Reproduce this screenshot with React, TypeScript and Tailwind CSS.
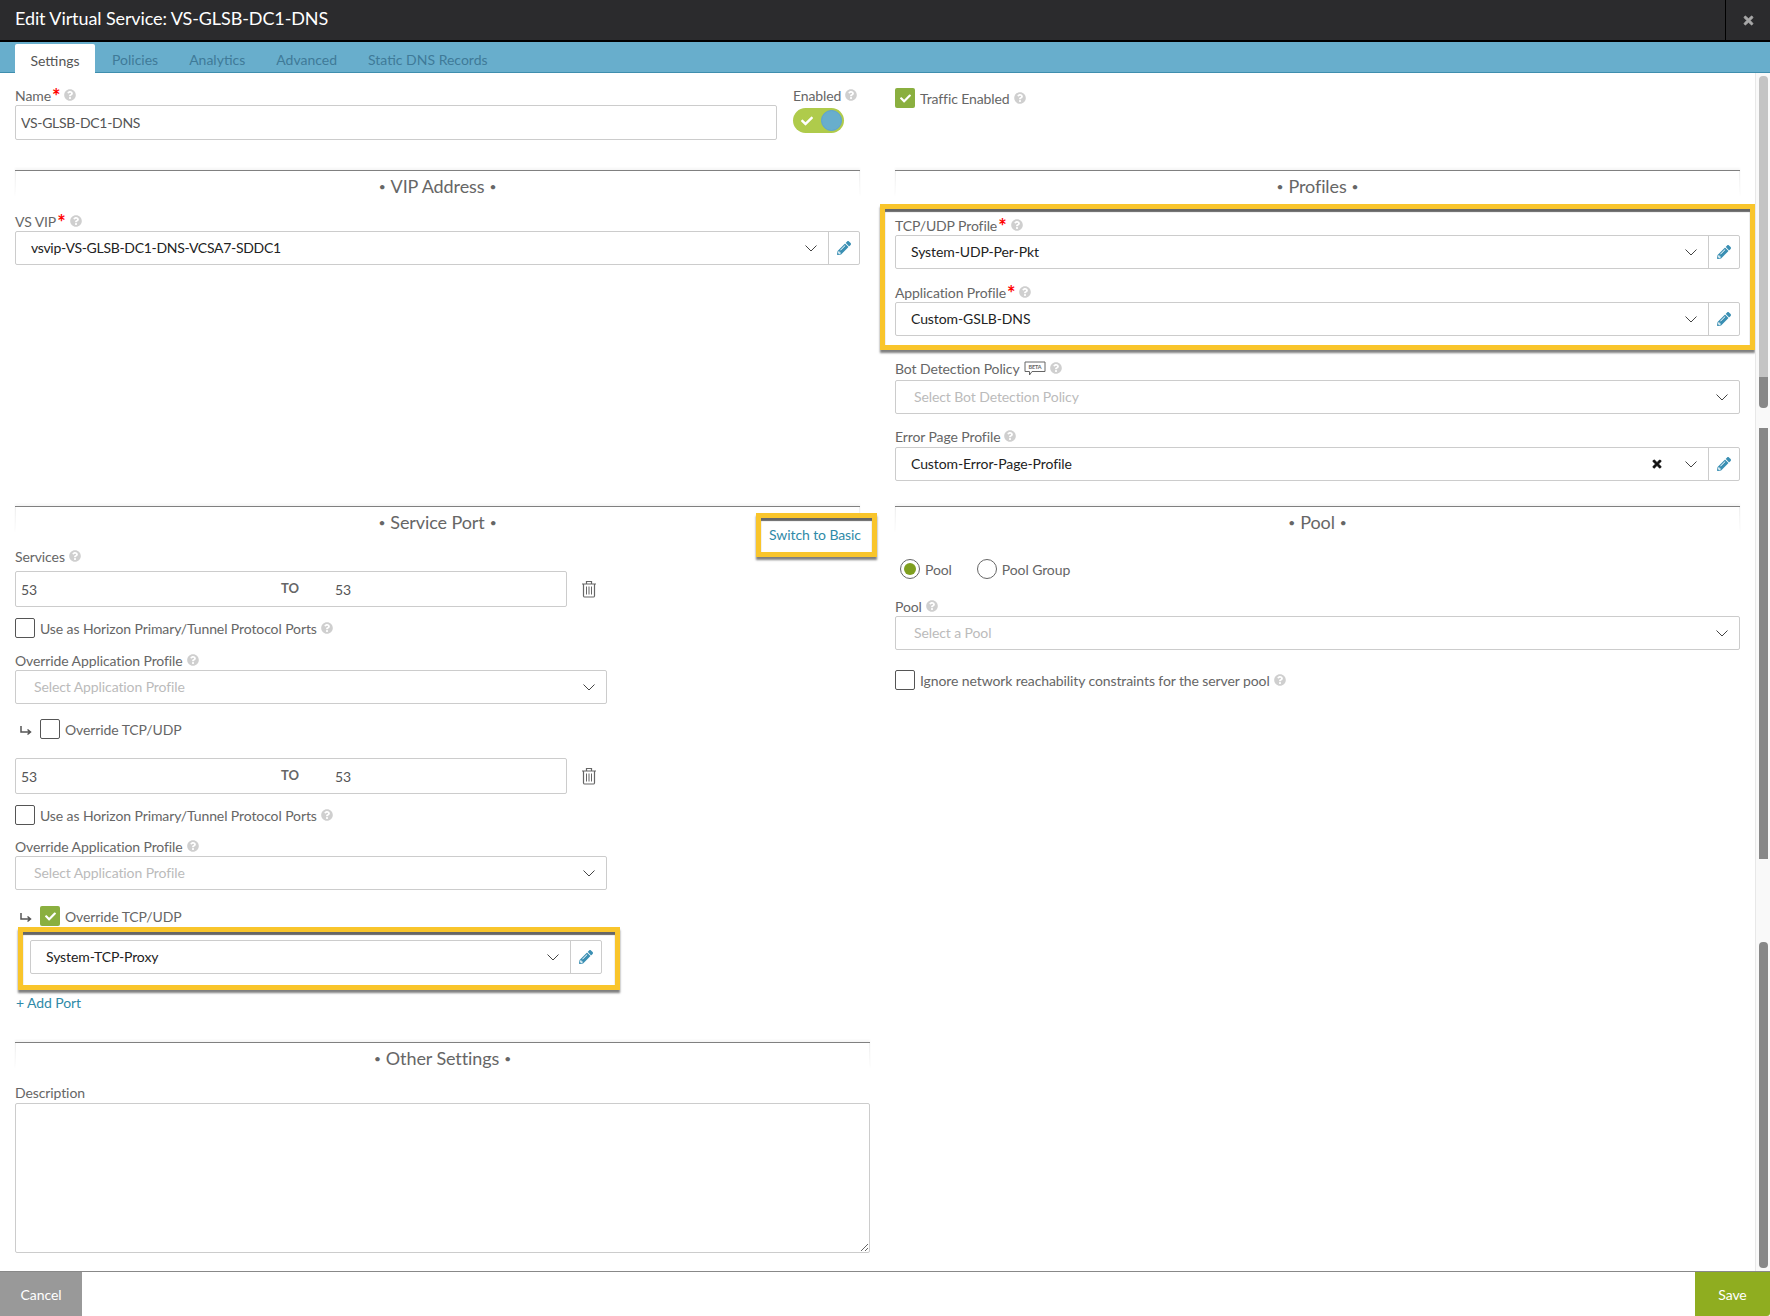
import React from 'react';
import { FaCheck, FaPencilAlt, FaQuestionCircle, FaTimes } from 'react-icons/fa';

const Help = () => <FaQuestionCircle className="ml-[4px] text-[#cfcfcf] shrink-0" size={12} />;

const Star = () => <span className="ml-[1px] h-[18px] text-[20px] leading-[20px] font-bold text-[#ff0000]">*</span>;

const Label: React.FC<{ text: string; req?: boolean; help?: boolean; children?: React.ReactNode }> = ({ text, req, help = true, children }) => (
  <div className="flex items-center h-[18px] pb-[2px] text-[14px] text-[#666666] whitespace-nowrap">
    <span>{text}</span>
    {req && <Star />}
    {children}
    {help && <Help />}
  </div>
);

const Chevron = () => (
  <svg width="12" height="7" viewBox="0 0 12 7" fill="none" className="shrink-0">
    <path d="M.5.5L6 6l5.5-5.5" stroke="#444444" strokeWidth="1" />
  </svg>
);

const Pencil = () => <FaPencilAlt className="text-[#3a8fb3]" size={14} />;

const Section: React.FC<{ title: string; className?: string }> = ({ title, className = '' }) => (
  <div className={`relative h-[27px] flex items-center justify-center border-t border-[#808080] text-[18px] text-[#666666] shadow-[0_-2px_2px_rgba(0,0,0,0.04)] ${className}`}>
    <span className="absolute left-0 top-0 h-full w-px bg-gradient-to-b from-[#eeeeee] to-white" />
    <span className="absolute right-0 top-0 h-full w-px bg-gradient-to-b from-[#eeeeee] to-white" />
    <span className="flex items-center gap-[5px] pt-[5px]">
      <span className="text-[12px]">•</span>
      {title}
      <span className="text-[12px]">•</span>
    </span>
  </div>
);

const Select: React.FC<{
  value?: string;
  placeholder?: string;
  edit?: boolean;
  clear?: boolean;
  className?: string;
}> = ({ value, placeholder, edit = true, clear, className = '' }) => (
  <div className={`flex h-[34px] items-stretch rounded-[2px] border border-[#cccccc] bg-white text-[14px] ${className}`}>
    <div className={`flex-1 flex items-center min-w-0 pb-[2px] ${value ? 'pl-[15px] text-[#222222]' : 'pl-[18px] text-[#bbbbbb]'}`}>
      {value || placeholder}
    </div>
    {clear && (
      <div className="flex items-center pr-[22px]">
        <FaTimes className="text-[#111111] stroke-[30px]" size={12} />
      </div>
    )}
    <div className="flex items-center pr-[11px]">
      <Chevron />
    </div>
    {edit && (
      <div className="w-[31px] flex items-center justify-center border-l border-[#cccccc]">
        <Pencil />
      </div>
    )}
  </div>
);

const Checkbox: React.FC<{ checked?: boolean }> = ({ checked }) =>
  checked ? (
    <div className="w-[20px] h-[20px] rounded-[2px] bg-[#8aaf3f] flex items-center justify-center shrink-0">
      <FaCheck className="text-white" size={11} />
    </div>
  ) : (
    <div className="w-[20px] h-[20px] rounded-[2px] border border-[#555555] bg-white shrink-0" />
  );

const CheckRow: React.FC<{ text: string; checked?: boolean; help?: boolean; className?: string }> = ({ text, checked, help = true, className = '' }) => (
  <div className={`flex items-center h-[20px] text-[14px] text-[#666666] ${className}`}>
    <Checkbox checked={checked} />
    <span className="ml-[5px]">{text}</span>
    {help && <Help />}
  </div>
);

const Trash = () => (
  <svg width="16" height="18" viewBox="0 0 16 18" fill="none" stroke="#666666" strokeWidth="1.2" className="shrink-0">
    <path d="M1 4h14M5.5 4V1.5h5V4M2.5 4v12a1.2 1.2 0 0 0 1.2 1h8.6a1.2 1.2 0 0 0 1.2-1V4" />
    <path d="M5.5 6.5v8M8 6.5v8M10.5 6.5v8" strokeWidth="1" />
  </svg>
);

const PortRange = ({ className = '' }: { className?: string }) => (
  <div className={`flex items-center ${className}`}>
    <div className="w-[552px] h-[36px] flex items-center rounded-[2px] border border-[#cccccc] text-[14px] text-[#555555]">
      <span className="ml-[5px] w-[260px]">53</span>
      <span className="w-[54px] font-bold text-[13px] text-[#666666]">TO</span>
      <span>53</span>
    </div>
    <div className="ml-[14px]">
      <Trash />
    </div>
  </div>
);

const ArrowRow: React.FC<{ checked?: boolean; className?: string }> = ({ checked, className = '' }) => (
  <div className={`flex items-center ${className}`}>
    <svg width="12" height="10" viewBox="0 0 12 10" fill="none" stroke="#555555" strokeWidth="1.5" className="ml-[5px] mr-[8px] mt-[3px]">
      <path d="M1 0v6h9M7.5 3.5L10.5 6l-3 2.5" />
    </svg>
    <CheckRow text="Override TCP/UDP" checked={checked} help={false} />
  </div>
);

const Radio: React.FC<{ text: string; on?: boolean }> = ({ text, on }) => (
  <div className="flex items-center h-[20px] text-[14px] text-[#666666]">
    <div className="w-[20px] h-[20px] rounded-full border border-[#666666] flex items-center justify-center">
      {on && <div className="w-[12px] h-[12px] rounded-full bg-[#7f9f1f]" />}
    </div>
    <span className="ml-[5px]">{text}</span>
  </div>
);

const Highlight: React.FC<{ className?: string; children: React.ReactNode }> = ({ className = '', children }) => (
  <div className={`border-[5px] border-[#f9c52b] bg-white shadow-[0_3px_2px_rgba(0,0,0,0.5),inset_0_3px_1px_#666666] ${className}`}>
    {children}
  </div>
);

export default function App() {
  return (
    <div className="w-[1770px] h-[1316px] flex flex-col overflow-hidden bg-white tracking-[-0.1px] [font-family:Lato,sans-serif]">
      {/* title bar */}
      <div className="h-[42px] shrink-0 flex items-center justify-between bg-[#2b2b2d] border-b-2 border-black">
        <span className="ml-[15px] pb-[3px] text-[18px] text-white">Edit Virtual Service: VS-GLSB-DC1-DNS</span>
        <div className="w-[45px] h-full flex items-center justify-center border-l border-black">
          <FaTimes className="text-[#a8a8a8] stroke-[30px]" size={13} />
        </div>
      </div>

      {/* tabs */}
      <div className="h-[31px] shrink-0 flex items-end pl-[15px] bg-[#68aecc] border-b border-[#3f8eae] text-[14px] tracking-normal">
        <div className="w-[80px] h-[29px] -mb-px pt-[3px] flex items-center justify-center rounded-t-[2px] bg-white text-[#555555]">Settings</div>
        <div className="flex h-[29px] pt-[3px] items-center gap-[31px] ml-[17px] text-[#3f7a98]">
          <span>Policies</span>
          <span>Analytics</span>
          <span>Advanced</span>
          <span>Static DNS Records</span>
        </div>
      </div>

      {/* body */}
      <div className="flex-1 flex min-h-0">
        <div className="flex-1 pl-[15px] min-w-0">
          <div className="grid grid-cols-[845px_845px] gap-x-[35px]">
            {/* left column */}
            <div>
              <div className="flex pt-[14px]">
                <div className="w-[762px]">
                  <Label text="Name" req />
                  <input
                    readOnly
                    value="VS-GLSB-DC1-DNS"
                    className="w-full h-[35px] px-[5px] rounded-[2px] border border-[#cccccc] text-[14px] tracking-[-0.3px] text-[#555555] outline-none"
                  />
                </div>
                <div className="ml-[16px]">
                  <Label text="Enabled" />
                  <div className="relative w-[51px] h-[25px] mt-[3px] rounded-full bg-[#afcb4b]">
                    <FaCheck className="absolute left-[8px] top-[7px] text-white" size={12} />
                    <div className="absolute right-[2px] top-[2px] w-[21px] h-[21px] rounded-full bg-[#68aecc] border border-[#5aa0d8]" />
                  </div>
                </div>
              </div>
              <Section title="VIP Address" className="mt-[30px]" />
              <div className="mt-[16px]">
                <Label text="VS VIP" req />
                <Select value="vsvip-VS-GLSB-DC1-DNS-VCSA7-SDDC1" className="tracking-[-0.3px]" />
              </div>

              {/* service port */}
              <div className="relative mt-[241px]">
                <Section title="Service Port" />
                <Highlight className="absolute left-[741px] top-[7px] w-[121px] h-[44px] pb-[2px] pr-[3px] flex items-center justify-center text-[14px] text-[#2f8aa8]">
                  Switch to Basic
                </Highlight>
              </div>
              <div className="mt-[15px]">
                <Label text="Services" />
              </div>
              <PortRange className="mt-[5px]" />
              <CheckRow text="Use as Horizon Primary/Tunnel Protocol Ports" className="mt-[11px]" />
              <div className="mt-[14px] w-[592px]">
                <Label text="Override Application Profile" />
                <Select placeholder="Select Application Profile" edit={false} />
              </div>
              <ArrowRow className="mt-[15px]" />
              <PortRange className="mt-[19px]" />
              <CheckRow text="Use as Horizon Primary/Tunnel Protocol Ports" className="mt-[11px]" />
              <div className="mt-[13px] w-[592px]">
                <Label text="Override Application Profile" />
                <Select placeholder="Select Application Profile" edit={false} />
              </div>
              <ArrowRow checked className="mt-[16px]" />
              <Highlight className="ml-[3px] mt-[1px] w-[602px] h-[63px] pl-[7px] pr-[13px] pt-[8px]">
                <Select value="System-TCP-Proxy" />
              </Highlight>
              <div className="mt-[4px] h-[18px] pl-[1px] text-[14px] leading-[18px] text-[#2f8aa8]">+ Add Port</div>
            </div>

            {/* right column */}
            <div>
              <CheckRow text="Traffic Enabled" checked className="mt-[15px]" />
              <Section title="Profiles" className="mt-[62px]" />
              <Highlight className="-mx-[15px] mt-[7px] h-[146px] px-[10px] pt-[8px]">
                <Label text="TCP/UDP Profile" req />
                <Select value="System-UDP-Per-Pkt" />
                <div className="mt-[15px]">
                  <Label text="Application Profile" req />
                  <Select value="Custom-GSLB-DNS" />
                </div>
              </Highlight>
              <div className="mt-[10px]">
                <Label text="Bot Detection Policy">
                  <svg width="22" height="15" viewBox="0 0 22 15" fill="none" className="ml-[4px]">
                    <path d="M1 1h20v9.5H8L5.5 14v-3.5H1z" stroke="#666666" strokeWidth="1" />
                    <text x="11" y="8" textAnchor="middle" fontSize="5.5" fontWeight="700" fill="#666666">BETA</text>
                  </svg>
                </Label>
                <Select placeholder="Select Bot Detection Policy" edit={false} className="mt-[2px]" />
              </div>
              <div className="mt-[14px]">
                <Label text="Error Page Profile" />
                <Select value="Custom-Error-Page-Profile" clear className="mt-[1px]" />
              </div>

              <Section title="Pool" className="mt-[25px]" />
              <div className="mt-[26px] ml-[5px] flex gap-[25px]">
                <Radio text="Pool" on />
                <Radio text="Pool Group" />
              </div>
              <div className="mt-[19px]">
                <Label text="Pool" />
                <Select placeholder="Select a Pool" edit={false} />
              </div>
              <CheckRow text="Ignore network reachability constraints for the server pool" className="mt-[20px]" />
            </div>
          </div>

          {/* other settings */}
          <Section title="Other Settings" className="mt-[30px] w-[855px]" />
          <div className="mt-[15px] w-[855px]">
            <Label text="Description" help={false} />
            <textarea readOnly className="block w-full h-[150px] mt-[1px] rounded-[2px] border border-[#cccccc] outline-none" />
          </div>
        </div>

        {/* scrollbar */}
        <div className="w-[15px] shrink-0 flex flex-col pt-[3px] pl-[3px] bg-[#f9f9f9] border-l border-[#e8e8e8]">
          <div className="w-[9px] h-[301px] rounded-t-[4px] bg-[#c4c4c4]" />
          <div className="w-[9px] h-[31px] rounded-b-[4px] bg-[#888888]" />
          <div className="w-[9px] h-[431px] mt-[20px] bg-[#888888]" />
          <div className="w-[9px] h-[326px] mt-[83px] rounded-[4px] bg-[#888888]" />
        </div>
      </div>

      {/* footer */}
      <div className="h-[45px] shrink-0 flex justify-between border-t border-[#888888] text-[14px] text-white">
        <div className="w-[82px] flex items-center justify-center bg-[#999999]">Cancel</div>
        <div className="w-[75px] flex items-center justify-center rounded-br-[3px] bg-[#8fad20]">Save</div>
      </div>
    </div>
  );
}
